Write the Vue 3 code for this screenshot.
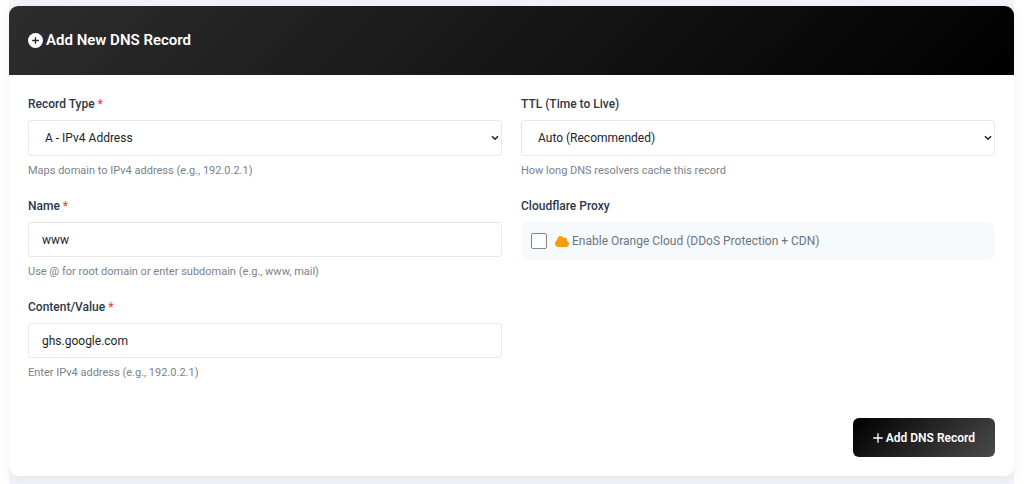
<script setup>
import { ref } from 'vue'

const type = ref('A')
const ttl = ref('auto')
const name = ref('www')
const content = ref('ghs.google.com')
const proxied = ref(false)
</script>

<template>
  <main class="page">
    <section class="card">
      <header class="card-header">
        <h1 class="title">
          <svg class="title-icon" viewBox="0 0 16 16" aria-hidden="true">
            <circle cx="8" cy="8" r="8" fill="#fff" />
            <path d="M8 5v6M5 8h6" stroke="#272727" stroke-width="1.4" stroke-linecap="round" />
          </svg>
          <span>Add New DNS Record</span>
        </h1>
      </header>
      <form class="card-body" @submit.prevent>
        <div class="fields">
          <div class="field">
            <label class="label" for="type">Record Type <span class="required">*</span></label>
            <div class="select-wrap">
              <select id="type" v-model="type" class="control select">
                <option value="A">A - IPv4 Address</option>
              </select>
              <svg class="chevron" viewBox="0 0 8 6" aria-hidden="true">
                <path d="M1 1.200l3 3 3-3" fill="none" stroke="#212529" stroke-width="1.600" />
              </svg>
            </div>
            <small class="hint">Maps domain to IPv4 address (e.g., 192.0.2.1)</small>
          </div>
          <div class="field">
            <label class="label" for="ttl">TTL (Time to Live)</label>
            <div class="select-wrap">
              <select id="ttl" v-model="ttl" class="control select">
                <option value="auto">Auto (Recommended)</option>
              </select>
              <svg class="chevron" viewBox="0 0 8 6" aria-hidden="true">
                <path d="M1 1.200l3 3 3-3" fill="none" stroke="#212529" stroke-width="1.600" />
              </svg>
            </div>
            <small class="hint">How long DNS resolvers cache this record</small>
          </div>
          <div class="field">
            <label class="label" for="name">Name <span class="required">*</span></label>
            <input id="name" v-model="name" class="control input" type="text" />
            <small class="hint">Use @ for root domain or enter subdomain (e.g., www, mail)</small>
          </div>
          <div class="field">
            <label class="label" for="proxy">Cloudflare Proxy</label>
            <div class="proxy">
              <input id="proxy" v-model="proxied" class="checkbox" type="checkbox" />
              <label class="proxy-label" for="proxy">
                <svg class="cloud" viewBox="0 0 640 448" preserveAspectRatio="none" aria-hidden="true">
                  <path fill="#f59e0b" d="M537.600 194.600C541.700 183.900 544 172.200 544 160c0-53-43-96-96-96-19.700 0-38.100 6-53.300 16.200C367 32.200 315.300 0 256 0 167.600 0 96 71.600 96 160c0 2.700.1 5.400.2 8.100C40.200 187.800 0 241.200 0 304c0 79.500 64.500 144 144 144h368c70.700 0 128-57.300 128-128 0-61.900-44-113.600-102.400-125.400z" />
                </svg>
                <span>Enable Orange Cloud (DDoS Protection + CDN)</span>
              </label>
            </div>
          </div>
          <div class="field">
            <label class="label" for="content">Content/Value <span class="required">*</span></label>
            <input id="content" v-model="content" class="control input" type="text" />
            <small class="hint">Enter IPv4 address (e.g., 192.0.2.1)</small>
          </div>
        </div>
        <div class="actions">
          <button class="submit" type="submit">
            <svg class="plus" viewBox="0 0 10 10" aria-hidden="true">
              <path d="M5 .7v8.600M.7 5h8.600" stroke="#fff" stroke-width="1.300" stroke-linecap="round" />
            </svg>
            <span>Add DNS Record</span>
          </button>
        </div>
      </form>
    </section>
  </main>
</template>

<style>
body {
  background: #fff;
}
</style>

<style scoped>
.page {
  margin: 0 10px 0 9px;
  padding: 6px 0 8px;
  background: #f3f4f9;
  font-family: Roboto, "Liberation Sans", sans-serif;
  color: #212529;
}
.card {
  overflow: hidden;
  border-radius: 9px;
  background: #fff;
  box-shadow: 0 3px 16px rgba(0, 0, 0, 0.06);
}
.card-header {
  padding: 24px 19px;
  background: linear-gradient(135deg, #2d2d2d 0%, #000 100%);
}
.title {
  display: flex;
  align-items: center;
  gap: 3px;
  margin: 0;
  color: #fff;
  font-size: 15px;
  font-weight: 600;
  line-height: 21px;
}
.title-icon {
  width: 15px;
  height: 15px;
}
.card-body {
  padding: 21px 19px 19px;
}
.fields {
  display: grid;
  grid-template-columns: 1fr 1fr;
  gap: 19px;
}
.field {
  display: flex;
  flex-direction: column;
  min-width: 0;
}
.label {
  margin-bottom: 8px;
  color: #2d3748;
  font-size: 12px;
  font-weight: 500;
  line-height: 16px;
}
.required {
  color: #ef4444;
}
.control {
  box-sizing: border-box;
  width: 100%;
  border: 1px solid #e6e8ea;
  border-radius: 3px;
  background: #fff;
  color: #212529;
  font-family: inherit;
  font-size: 12px;
}
.select-wrap {
  position: relative;
  display: flex;
}
.select {
  height: 36px;
  padding: 0 16px;
  appearance: none;
}
.chevron {
  position: absolute;
  top: 15px;
  right: 3px;
  width: 8px;
  height: 6px;
  pointer-events: none;
}
.input {
  height: 35px;
  padding: 0 13px;
}
.hint {
  margin-top: 7px;
  color: #7b8289;
  font-size: 11px;
  line-height: 16px;
}
.proxy {
  display: flex;
  align-items: center;
  gap: 8px;
  height: 38px;
  padding: 0 10px;
  border-radius: 6px;
  background: #f6fafd;
}
.checkbox {
  box-sizing: border-box;
  width: 16px;
  height: 16px;
  margin: 0;
  border: 1px solid #858585;
  border-radius: 2px;
  background: #fff;
  appearance: none;
}
.checkbox:checked {
  border-color: #f59e0b;
  background: #f59e0b;
}
.proxy-label {
  display: flex;
  align-items: center;
  gap: 3px;
  color: #6c757d;
  font-size: 12px;
}
.cloud {
  width: 14px;
  height: 11px;
}
.actions {
  display: flex;
  justify-content: flex-end;
  margin-top: 37px;
}
.submit {
  display: flex;
  align-items: center;
  gap: 3px;
  height: 39px;
  padding: 0 20px;
  border: 0;
  border-radius: 6px;
  background: linear-gradient(135deg, #000 0%, #4a4a4a 100%);
  color: #fff;
  font-family: inherit;
  font-size: 12px;
  font-weight: 600;
}
.plus {
  width: 10px;
  height: 10px;
}
</style>
